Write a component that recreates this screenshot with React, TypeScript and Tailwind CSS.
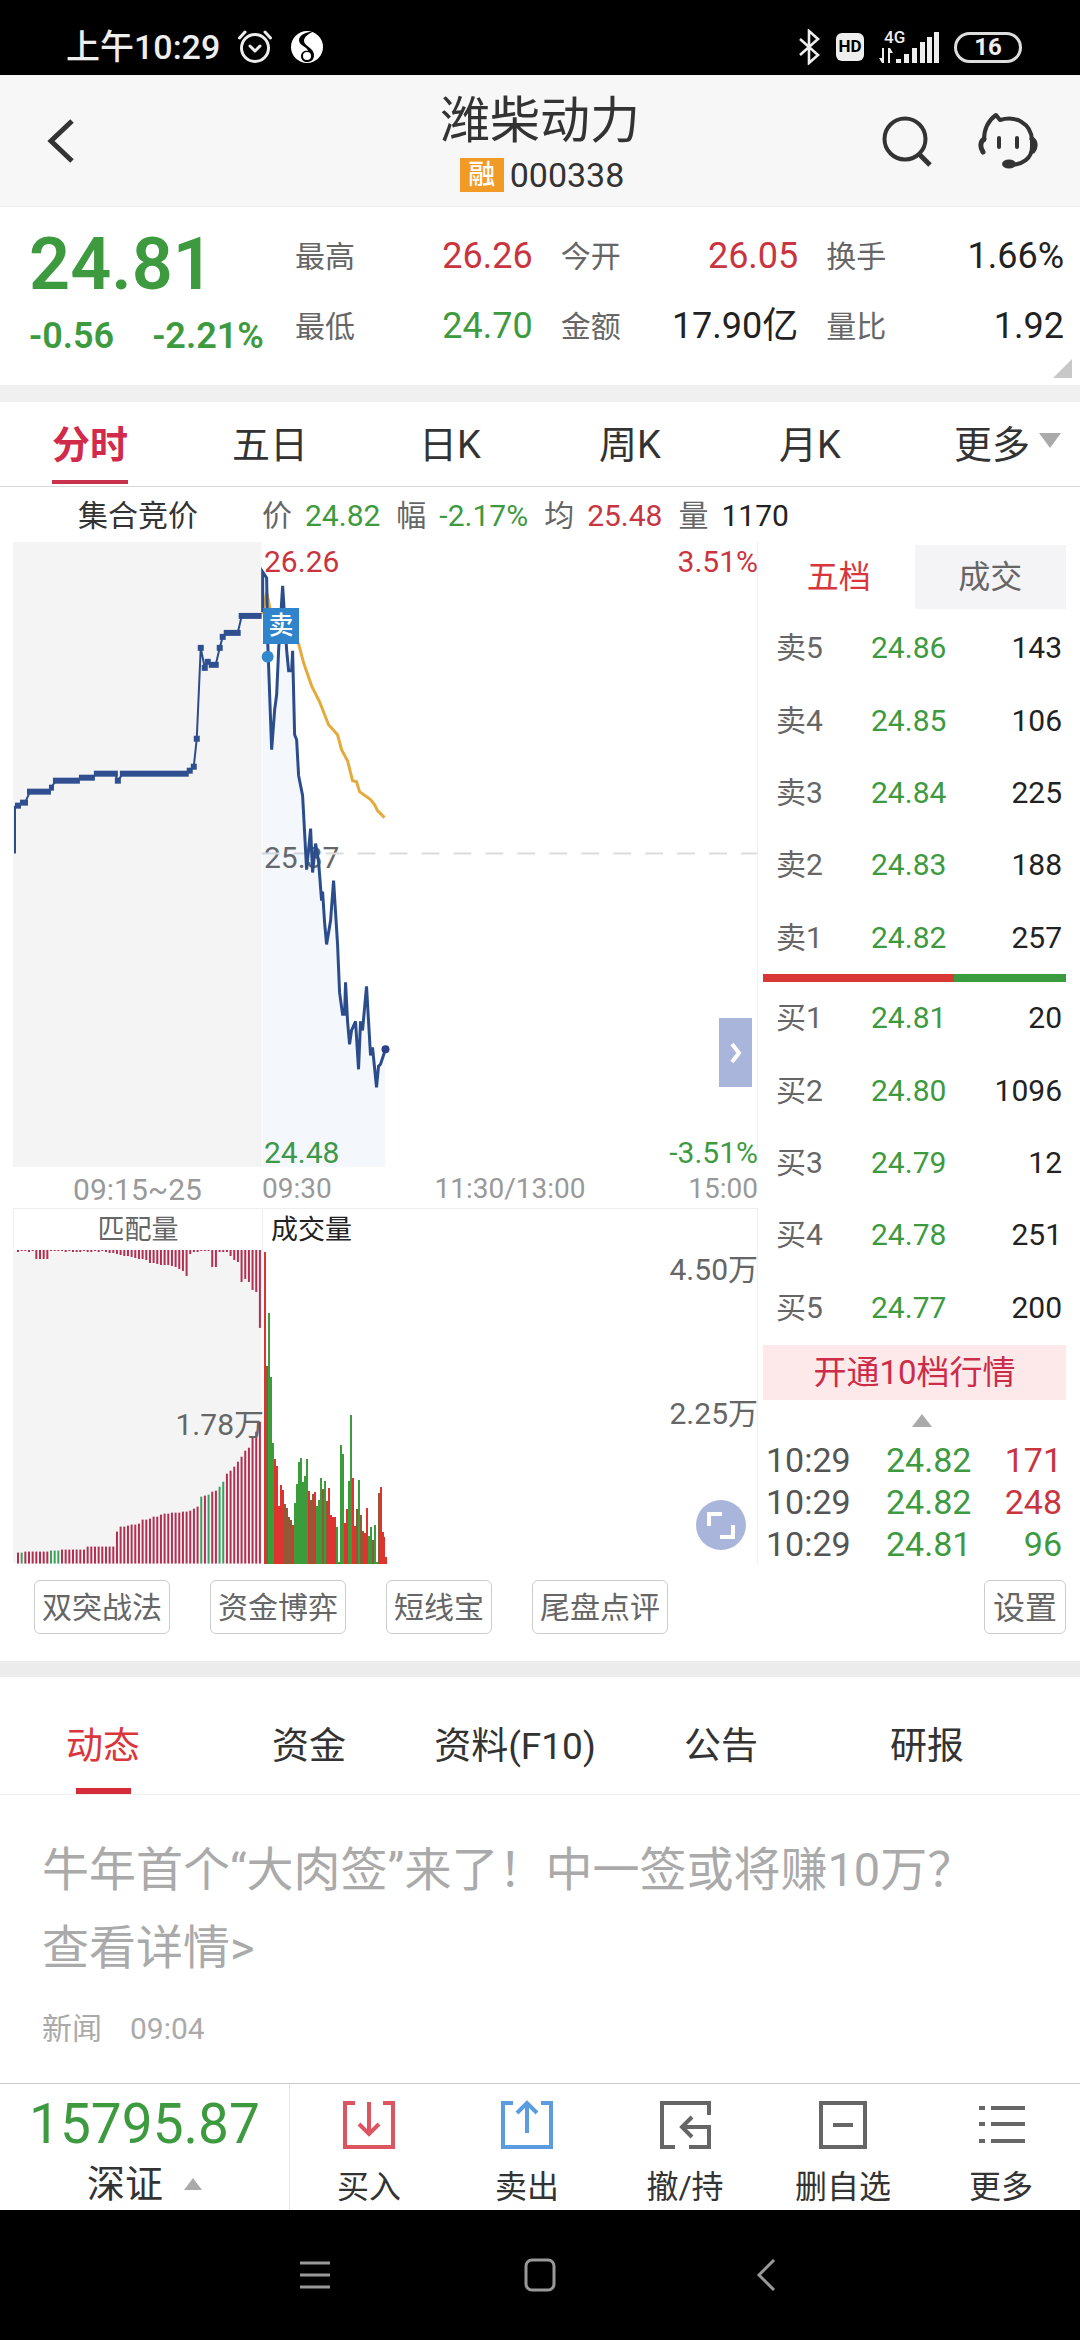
import { useState } from "react";

const RED = "text-[#c9353f]";
const GREEN = "text-[#3d9a3f]";

const PERIODS = ["分时", "五日", "日K", "周K", "月K"];
const SECTIONS = ["动态", "资金", "资料(F10)", "公告", "研报"];
const TOOLS = ["双突战法", "资金博弈", "短线宝", "尾盘点评"];

const STATS = [
  { label: "最高", value: "26.26", color: RED },
  { label: "今开", value: "26.05", color: RED },
  { label: "换手", value: "1.66%", color: "text-[#222]" },
  { label: "最低", value: "24.70", color: GREEN },
  { label: "金额", value: "17.90亿", color: "text-[#222]" },
  { label: "量比", value: "1.92", color: "text-[#222]" },
];

const CURSOR = [
  { label: "价", value: "24.82", color: GREEN },
  { label: "幅", value: "-2.17%", color: GREEN },
  { label: "均", value: "25.48", color: RED },
  { label: "量", value: "1170", color: "text-[#222]" },
];

type Row = [string, string, string];

const ASKS: Row[] = [
  ["卖5", "24.86", "143"],
  ["卖4", "24.85", "106"],
  ["卖3", "24.84", "225"],
  ["卖2", "24.83", "188"],
  ["卖1", "24.82", "257"],
];

const BIDS: Row[] = [
  ["买1", "24.81", "20"],
  ["买2", "24.80", "1096"],
  ["买3", "24.79", "12"],
  ["买4", "24.78", "251"],
  ["买5", "24.77", "200"],
];

const TRADES = [
  { time: "10:29", price: "24.82", qty: "171", color: RED },
  { time: "10:29", price: "24.82", qty: "248", color: RED },
  { time: "10:29", price: "24.81", qty: "96", color: GREEN },
];

// call auction, as flat runs: [x from, x to, y]
const AUCTION = [
  [2, 8, 264], [7, 15, 261], [14, 38, 250], [36, 41, 246], [40, 67, 239], [66, 82, 236],
  [81, 105, 232], [102, 108, 239], [107, 176, 232], [174, 180, 229], [178, 184, 225],
  [181, 187, 197], [185, 191, 106], [189, 195, 126], [192, 198, 120], [196, 206, 123],
  [204, 210, 106], [207, 213, 95], [211, 228, 91], [226, 249, 74],
];

const PRICE =
  "250,70 250,30 254,36 255,98 259,208 262,168 264,153 266,108 270,44 274,108 276,129 279,129 280,109 282,193 284,198 286,234 290,254 294,328 298,287 300,331 303,302 306,320 309,359 310,350 312,381 314,403 318,379 321,339 325,403 327,451 330,473 332,473 333,441 335,480 337,503 339,489 343,480 346,528 348,480 350,489 354,445 358,514 360,506 364,546 366,525 368,523 373,508";

const AVERAGE =
  "250,72 254,50 260,80 286,102 291,121 299,144 307,160 316,183 325,193 329,208 335,219 340,239 344,240 347,250 358,258 362,263 365,269 372,276";

const MATCHED = [
  11, 11, 12, 12, 12, 12, 12, 12, 12, 13, 13, 13, 14, 14, 14, 14, 14, 14, 14, 17, 17, 17, 17, 17, 17, 17, 17,
  32, 37, 37, 38, 39, 39, 40, 44, 44, 45, 47, 47, 49, 50, 50, 51, 51, 51, 52, 52, 53, 55, 57, 67, 68, 69, 72,
  73, 77, 82, 90, 93, 97, 102, 107, 113, 116, 127, 132, 142,
];
const MATCHED_GREEN = [1, 9, 10, 11, 50, 52, 55, 56];

const UNMATCHED = [
  2, 1, 1, 2, 1, 9, 9, 9, 9, 1, 1, 1, 1, 2, 1, 2, 2, 2, 1, 2, 2, 1, 2, 1, 2, 3, 3, 4, 5, 6, 6, 7, 8, 9, 9, 10,
  13, 13, 14, 15, 15, 15, 16, 17, 19, 21, 26, 4, 2, 2, 1, 1, 1, 17, 17, 2, 2, 2, 6, 10, 12, 32, 29, 32, 40, 42, 78,
];

// r = up, g = down, m = mixed
const VOLUME = "r312 m198 g251 g187 g121 r105 r98 r58 r79 r74 m60 m56 m47 m44 r39 g61 g80 g102 g106 g82 g88 g105 r73 m64 m70 r72 g58 g64 g86 m75 g83 m63 r76 r49 r47 r47 g37 g2 g119 g110 r41 r55 g83 g149 r86 r38 m55 g84 m49 m33 r31 r56 g28 g37 m24 g39 g2 m71 r77 r32 r27 r7"
  .split(" ")
  .map(s => ({ kind: s[0], size: Number(s.slice(1)) }));
const VOLUME_FILL: Record<string, string> = { r: "#df3330", g: "#3b9c3b", m: "#8f5a35" };

function StatusBar() {
  return (
    <div className="flex h-[75px] items-center justify-between bg-black pl-[66px] pr-[58px] pt-[19px] text-[#eee]">
      <div className="flex items-center gap-[17px]">
        <span className="text-[34px] font-medium leading-[40px]">上午10:29</span>
        <svg width="36" height="36" viewBox="0 0 36 36" fill="none" stroke="currentColor" strokeWidth="3" strokeLinecap="round">
          <circle cx="18" cy="19" r="13.5" />
          <path d="M2.5 9 8 3M33.500 9 28 3" />
          <path d="m13 17 5 5 5-5" strokeLinejoin="round" />
        </svg>
        <svg width="34" height="34" viewBox="0 0 34 34">
          <circle cx="17" cy="17" r="16" fill="#fff" />
          <path d="M24 1c-6 3-10 6-10 10 0 5 10 7 10 14 0 5-3 7-7 7-3 0-6-2-6-6 0-3 3-6 7-5 0-4-9-5-9-11C9 5 16 2 24 1z" fill="#000" />
          <circle cx="17" cy="26" r="4" fill="#fff" />
        </svg>
      </div>
      <div className="flex items-center gap-[15px]">
        <svg width="24" height="36" viewBox="0 0 24 36" fill="none" stroke="currentColor" strokeWidth="2.600">
          <path d="M3 10l18 16-9 8V2l9 8L3 26" />
        </svg>
        <span className="flex h-[28px] w-[28px] items-center justify-center rounded-[6px] bg-[#eee] text-[17px] font-bold text-black">HD</span>
        <svg width="60" height="48" viewBox="0 -6 60 48" fill="currentColor">
          <text x="5" y="14" fontSize="17" fontWeight="500">4G</text>
          <path d="M3 19h2v15H3zM3 34l-3-5h3zM9 19h2v15H9zM11 19l3 5h-3zM17 30h5v4h-5zM25 25h5v9h-5zM33 19h5v15h-5zM41 13h5v21h-5zM48 8h5v26h-5zM55 3h5v31h-5z" />
        </svg>
        <span className="flex h-[31px] w-[68px] items-center justify-center rounded-full border-[3px] border-[#ddd] text-[24px] font-bold">16</span>
      </div>
    </div>
  );
}

function Header() {
  return (
    <header className="relative flex h-[132px] flex-col items-center border-b border-[#eee] bg-[#f7f7f7] pt-[16px] text-[#333]">
      <h1 className="text-[50px] leading-[60px]">潍柴动力</h1>
      <div className="flex items-center gap-[6px] pl-[4px] pt-[4px]">
        <span className="flex h-[34px] w-[44px] items-center justify-center bg-[#f29a26] text-[27px] font-medium text-white">融</span>
        <span className="text-[34px] leading-[40px]">000338</span>
      </div>
      <button aria-label="返回" className="absolute inset-y-0 left-[44px]">
        <svg width="34" height="46" viewBox="0 0 34 46" fill="none" stroke="currentColor" strokeWidth="5">
          <path d="M28 3 7 23l21 20" />
        </svg>
      </button>
      <div className="absolute inset-y-0 right-[42px] flex items-center gap-[44px]">
        <button aria-label="搜索">
          <svg width="54" height="54" viewBox="0 0 54 54" fill="none" stroke="currentColor" strokeWidth="4">
            <circle cx="25" cy="25" r="20.500" />
            <path d="m39 40 11 11" strokeWidth="5" />
          </svg>
        </button>
        <button aria-label="客服">
          <svg width="60" height="60" viewBox="0 0 60 60" fill="none" stroke="currentColor" strokeWidth="4" strokeLinecap="round">
            <path d="M6 29C6 17 11 9 18 4l4 5c15-5 31 3 32 20v7c0 11-9 18-23 18" strokeLinejoin="round" />
            <path d="M6 28c-4 3-4 8-1 13M54 28c4 3 4 8 1 12" strokeWidth="5" />
            <path d="M21 27v9M39 27v9" />
            <ellipse cx="31" cy="53" rx="7" ry="4.500" fill="currentColor" stroke="none" />
          </svg>
        </button>
      </div>
    </header>
  );
}

function Quote() {
  return (
    <section className="relative flex h-[178px] pr-[16px]">
      <div className="w-[295px] shrink-0 whitespace-nowrap pl-[29px] pt-[22px] text-[#3d9a3f]">
        <div className="text-[72px] font-semibold leading-[72px]">24.81</div>
        <div className="flex gap-[38px] text-[36px] font-semibold leading-[70px]">
          <span>-0.56</span>
          <span>-2.21%</span>
        </div>
      </div>
      <dl className="grid flex-1 grid-cols-3 content-start gap-x-[28px] pt-[14px]">
        {STATS.map(s => (
          <div key={s.label} className="flex h-[70px] items-center justify-between">
            <dt className="text-[30px] text-[#666]">{s.label}</dt>
            <dd className={`text-[36px] ${s.color}`}>{s.value}</dd>
          </div>
        ))}
      </dl>
      <svg className="absolute bottom-[7px] right-[8px]" width="19" height="19" viewBox="0 0 19 19">
        <path d="M19 0v19H0z" fill="#c8c8c8" />
      </svg>
    </section>
  );
}

function PeriodTabs() {
  const [active, setActive] = useState("分时");
  return (
    <nav className="grid h-[85px] grid-cols-6 border-b border-[#d8d8d8] text-[38px] text-[#333]">
      {PERIODS.map(p => (
        <button key={p} onClick={() => setActive(p)} className="flex justify-center">
          <span
            className={
              p === active
                ? "h-[82px] border-b-4 border-[#c9324c] font-bold leading-[86px] text-[#d22a4b]"
                : "h-[82px] leading-[86px]"
            }
          >
            {p}
          </span>
        </button>
      ))}
      <button className="flex justify-end gap-[9px] pr-[19px]">
        <span className="leading-[86px]">更多</span>
        <svg className="mt-[31px]" width="22" height="15" viewBox="0 0 22 15">
          <path d="M0 0h22L11 15z" fill="#aaa" />
        </svg>
      </button>
    </nav>
  );
}

function PriceChart() {
  const link = AUCTION.map(([a, b, y]) => `${a + 3},${y} ${b - 3},${y}`).join(" ");
  return (
    <div className="relative border-r border-[#f0f0f0]">
      <div className="absolute -bottom-[6px] -right-px left-[251px] top-0 flex flex-col justify-between text-[30px] leading-[40px]">
        <div className="flex justify-between text-[#c9353f]">
          <span>26.26</span>
          <span>3.51%</span>
        </div>
        <div className="text-[#666]">25.37</div>
        <div className="flex justify-between text-[#3d9a3f]">
          <span>24.48</span>
          <span>-3.51%</span>
        </div>
      </div>
      <svg className="relative block w-full" viewBox="0 0 745 626" fill="none">
        <rect width="249" height="626" fill="#f4f4f5" />
        <path d="M249 312H745" stroke="#dcdcdc" strokeWidth="2" strokeDasharray="18 14" />
        <polygon points={`250,626 ${PRICE} 373,626`} fill="#4a90c8" fillOpacity="0.06" />
        <polyline points={AVERAGE} stroke="#e5aa3c" strokeWidth="3" />
        <path d="M2 312V264" stroke="#2c4d8c" strokeWidth="2" />
        <polyline points={link} stroke="#2c4d8c" strokeWidth="2" />
        {AUCTION.map(([a, b, y]) => (
          <rect key={a} x={a} y={y - 3} width={b - a} height="6" fill="#2f4f90" />
        ))}
        <polyline points={PRICE} stroke="#2c4d8c" strokeWidth="3" />
        <circle cx="373" cy="508" r="4" fill="#2c3f8a" />
        <circle cx="255" cy="115" r="6" fill="#3488cc" />
      </svg>
      <span className="absolute left-[250px] top-[66px] flex h-[36px] w-[36px] items-center justify-center bg-[#2f84cc] text-[25px] font-medium text-white">
        卖
      </span>
      <button aria-label="展开" className="absolute bottom-[80px] right-[5px] flex h-[69px] w-[33px] items-center justify-center bg-[#a9b5da]">
        <svg width="14" height="22" viewBox="0 0 14 22" fill="none" stroke="#fff" strokeWidth="4">
          <path d="m3 2 7 9-7 9" />
        </svg>
      </button>
    </div>
  );
}

function VolumeChart() {
  return (
    <div className="relative border-r border-[#f0f0f0]">
      <svg className="block w-full" viewBox="0 0 745 315">
        <rect y="1" width="249" height="314" fill="#f4f4f4" />
        {UNMATCHED.map((h, i) => (
          <rect key={i} x={4 + i * 3.67} y="1" width="2" height={h} fill="#b32e50" />
        ))}
        {MATCHED.map((h, i) => (
          <rect
            key={i}
            x={4 + i * 3.67}
            y={315 - h}
            width="2"
            height={h}
            fill={MATCHED_GREEN.includes(i) ? "#3aa05c" : "#b32e50"}
          />
        ))}
        {VOLUME.map((v, i) => (
          <rect
            key={i}
            x={251 + i * 2}
            y={315 - v.size}
            width="2"
            height={v.size}
            fill={VOLUME_FILL[v.kind]}
            shapeRendering="crispEdges"
          />
        ))}
      </svg>
      <div className="absolute -right-px top-[1px] text-[30px] leading-[40px] text-[#666]">4.50万</div>
      <div className="absolute -right-px top-[145px] text-[30px] leading-[40px] text-[#666]">2.25万</div>
      <div className="absolute left-0 top-[156px] w-[251px] text-right text-[30px] leading-[40px] text-[#666]">1.78万</div>
      <button aria-label="全屏" className="absolute bottom-[14px] right-[11px] h-[50px] w-[50px] rounded-full bg-[#a9b5da]">
        <svg className="mx-auto" width="30" height="30" viewBox="0 0 30 30" fill="none" stroke="#fff" strokeWidth="4">
          <path d="M3 16V4h13M27 15v12H14" />
        </svg>
      </button>
    </div>
  );
}

function Book({ rows }: { rows: Row[] }) {
  return (
    <table className="h-[362px] w-full text-[30px] leading-[40px]">
      <tbody>
        {rows.map(([name, price, qty]) => (
          <tr key={name}>
            <td className="w-[108px] pl-[13px] text-[#666]">{name}</td>
            <td className="text-[#3d9a3f]">{price}</td>
            <td className="pr-[4px] text-right text-[#222]">{qty}</td>
          </tr>
        ))}
      </tbody>
    </table>
  );
}

function OrderPanel() {
  return (
    <aside className="ml-[5px] mr-[14px] w-[303px] shrink-0 pt-[3px]">
      <div className="grid h-[67px] grid-cols-2 pb-[3px] text-[32px]">
        <button className="text-[#d9363c]">五档</button>
        <button className="bg-[#f4f3f5] text-[#666]">成交</button>
      </div>
      <Book rows={ASKS} />
      <div className="flex h-[8px] bg-[#3b9c3f]">
        <div className="w-[63%] bg-[#d93636]" />
      </div>
      <Book rows={BIDS} />
      <button className="mt-px block h-[55px] w-full bg-[#fde9ea] text-[33px] text-[#cc2c48]">开通10档行情</button>
      <div className="flex justify-center pb-[12px] pl-[14px] pt-[14px]">
        <svg width="20" height="13" viewBox="0 0 20 13">
          <path d="M10 0l10 13H0z" fill="#aaa" />
        </svg>
      </div>
      <table className="w-full text-[34px] leading-[42px]">
        <tbody>
          {TRADES.map((t, i) => (
            <tr key={i}>
              <td className="w-[123px] pl-[3px] text-[#555]">{t.time}</td>
              <td className="text-[#3d9a3f]">{t.price}</td>
              <td className={`pr-[4px] text-right ${t.color}`}>{t.qty}</td>
            </tr>
          ))}
        </tbody>
      </table>
    </aside>
  );
}

function ActionBar() {
  return (
    <footer className="flex h-[127px] border-t border-[#c8c8c8] bg-white text-[#333]">
      <button className="flex w-[290px] shrink-0 flex-col items-center border-r border-[#e4e4e4] pt-[10px]">
        <span className="text-[55px] leading-[60px] text-[#3d9a3f]">15795.87</span>
        <span className="flex items-center gap-[21px] text-[38px] leading-[60px]">
          深证
          <svg width="18" height="12" viewBox="0 0 18 12">
            <path d="M9 0l9 12H0z" fill="#aaa" />
          </svg>
        </span>
      </button>
      <div className="grid flex-1 grid-cols-5 text-[32px] leading-[50px]">
        <button className="flex flex-col items-center gap-[12px] pt-[16px]">
          <svg width="52" height="50" viewBox="0 0 52 50" fill="none" stroke="#dc5560" strokeWidth="4">
            <path d="M12 3H2v44h48V3H40M26 2v31M16 24l10 10 10-10" />
          </svg>
          买入
        </button>
        <button className="flex flex-col items-center gap-[12px] pt-[16px]">
          <svg width="52" height="50" viewBox="0 0 52 50" fill="none" stroke="#5b9be0" strokeWidth="4">
            <path d="M12 3H2v44h48V3H40M26 33V4M16 13 26 3l10 10" />
          </svg>
          卖出
        </button>
        <button className="flex flex-col items-center gap-[12px] pt-[16px]">
          <svg width="52" height="50" viewBox="0 0 52 50" fill="none" stroke="#666" strokeWidth="4">
            <path d="M50 15V3H3v44h13M50 47H30M50 49V27H24M33 17 23 27l10 10" />
          </svg>
          撤/持
        </button>
        <button className="flex flex-col items-center gap-[12px] pt-[16px]">
          <svg width="52" height="50" viewBox="0 0 52 50" fill="none" stroke="#666" strokeWidth="4">
            <path d="M4 3h44v44H4zM16 25h20" />
          </svg>
          删自选
        </button>
        <button className="flex flex-col items-center gap-[12px] pt-[16px]">
          <svg width="52" height="50" viewBox="0 0 52 50" fill="none" stroke="#666" strokeWidth="4">
            <path d="M4 8h6M16 8h34M4 24h6M16 24h34M4 41h6M16 41h34" />
          </svg>
          更多
        </button>
      </div>
    </footer>
  );
}

export default function App() {
  const [section, setSection] = useState("动态");

  return (
    <div className="flex min-h-screen flex-col bg-white font-[Roboto,'Noto_Sans_CJK_SC',sans-serif]" lang="zh-CN">
      <StatusBar />
      <Header />
      <Quote />
      <div className="h-[17px] bg-[#f0f0f0]" />
      <PeriodTabs />

      <div className="flex h-[55px] items-center pl-[78px] pt-[2px] text-[30px]">
        <span className="mr-[64px] text-[#333]">集合竞价</span>
        <div className="flex gap-[16px]">
          {CURSOR.map(c => (
            <span key={c.label} className="flex gap-[13px]">
              <span className="text-[#666]">{c.label}</span>
              <span className={c.color}>{c.value}</span>
            </span>
          ))}
        </div>
      </div>

      <main className="flex">
        <div className="min-w-0 flex-1 pl-[13px]">
          <PriceChart />
          <div className="flex h-[42px] items-center border-b border-[#eee] pt-[3px] text-[28px] text-[#999]">
            <span className="w-[249px] text-center text-[30px]">09:15~25</span>
            <div className="flex flex-1 justify-between">
              <span>09:30</span>
              <span>11:30/13:00</span>
              <span>15:00</span>
            </div>
          </div>
          <div className="flex h-[40px] items-center border-x border-[#eee] text-[27px] leading-[40px]">
            <span className="w-[249px] border-r border-[#eee] pt-[2px] text-center text-[#666]">匹配量</span>
            <span className="pl-[8px] pt-[2px] text-[#222]">成交量</span>
          </div>
          <VolumeChart />
        </div>
        <OrderPanel />
      </main>

      <div className="flex items-center gap-[40px] pb-[27px] pl-[34px] pr-[14px] pt-[15px] text-[30px] leading-[50px] text-[#666]">
        {TOOLS.map(t => (
          <button key={t} className="rounded-[6px] border border-[#ccc] px-[7px] pt-[2px]">{t}</button>
        ))}
        <button className="ml-auto rounded-[6px] border border-[#ccc] px-[8px] pt-[2px] text-[32px]">设置</button>
      </div>
      <div className="h-[16px] bg-[#ececec]" />

      <nav className="grid h-[118px] grid-cols-5 border-b border-[#eee] pr-[50px] text-[37px] text-[#333]">
        {SECTIONS.map(s => (
          <button key={s} onClick={() => setSection(s)} className="flex flex-col items-center pt-[6px]">
            <span className={s === section ? "h-[105px] leading-[128px] text-[#d9363c]" : "h-[105px] leading-[128px]"}>{s}</span>
            {s === section && <span className="h-[6px] w-[55px] bg-[#d52b3a]" />}
          </button>
        ))}
      </nav>

      <a href="#news" className="block flex-1 pl-[42px] pr-[42px] pt-[36px] text-[#aaa]">
        <p className="text-[47px] leading-[78px]">
          牛年首个“大肉签”来了！中一签或将赚10万？
          <br />
          查看详情&gt;
        </p>
        <p className="flex gap-[28px] pt-[22px] text-[30px] leading-[40px]">
          <span>新闻</span>
          <span>09:04</span>
        </p>
      </a>

      <ActionBar />
      <div className="flex h-[130px] items-center justify-center gap-[193px] bg-black text-[#999]">
        <button aria-label="任务">
          <svg width="32" height="32" viewBox="0 0 32 32" stroke="currentColor" strokeWidth="3">
            <path d="M1 4h30M1 16h30M1 28h30" />
          </svg>
        </button>
        <button aria-label="主页">
          <svg width="32" height="34" viewBox="0 0 32 34" fill="none" stroke="currentColor" strokeWidth="3">
            <rect x="2" y="2" width="28" height="30" rx="6" />
          </svg>
        </button>
        <button aria-label="后退">
          <svg width="32" height="34" viewBox="0 0 32 34" fill="none" stroke="currentColor" strokeWidth="3">
            <path d="M25 2 10 17l15 15" />
          </svg>
        </button>
      </div>
    </div>
  );
}
